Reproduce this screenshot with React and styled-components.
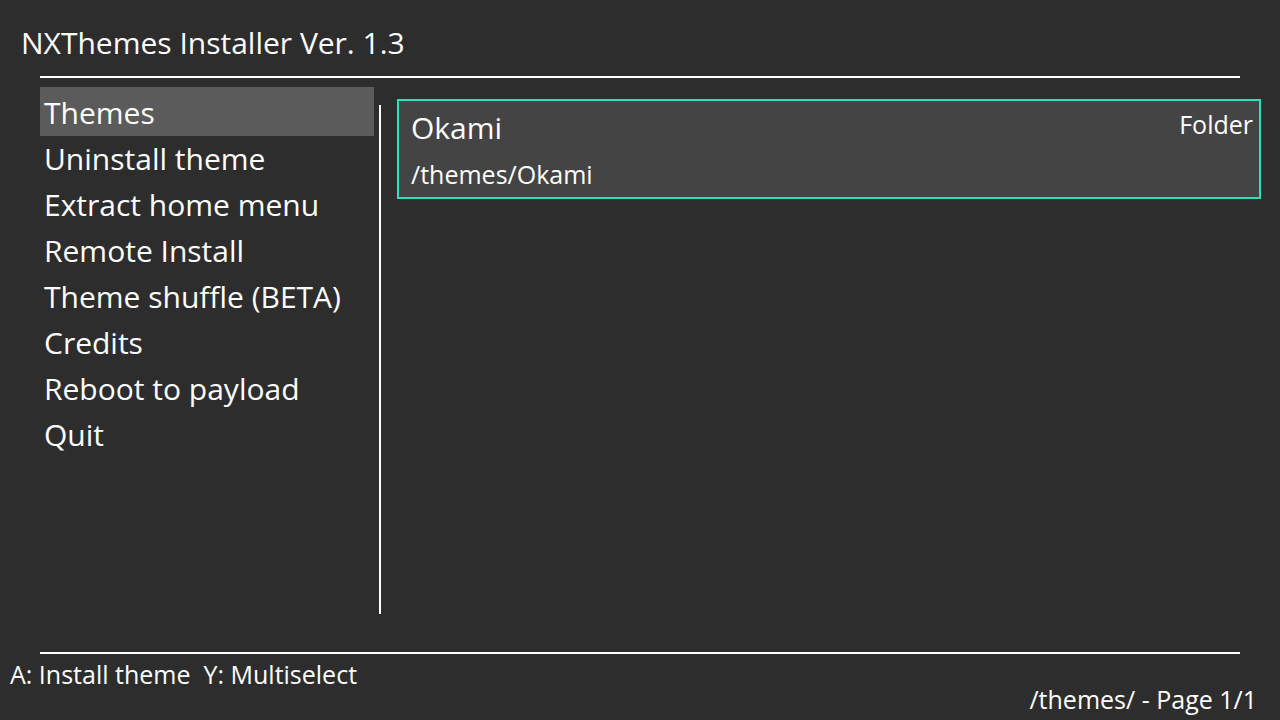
import React from "react";
import styled, { createGlobalStyle } from "styled-components";

const GlobalStyle = createGlobalStyle`
  html, body {
    margin: 0;
    padding: 0;
    background: #2d2d2d;
  }
  body {
    font-family: "Open Sans", "Noto Sans", sans-serif;
    color: #ffffff;
  }
`;

const menu = [
  "Themes",
  "Uninstall theme",
  "Extract home menu",
  "Remote Install",
  "Theme shuffle (BETA)",
  "Credits",
  "Reboot to payload",
  "Quit",
];

const App = () => {
  return (
    <Screen>
      <GlobalStyle />
      <Title>NXThemes Installer Ver. 1.3</Title>
      <Rule />
      <Body>
        <Sidebar>
          {menu.map((item, i) => (
            <MenuItem key={item} selected={i === 0}>
              {item}
            </MenuItem>
          ))}
        </Sidebar>
        <Divider />
        <Content>
          <Card>
            <CardHead>
              <CardTitle>Okami</CardTitle>
              <CardType>Folder</CardType>
            </CardHead>
            <CardPath>/themes/Okami</CardPath>
          </Card>
        </Content>
      </Body>
      <Rule />
      <Footer>
        <Hint>A: Install theme&nbsp;&nbsp;Y: Multiselect</Hint>
        <PageInfo>/themes/ - Page 1/1</PageInfo>
      </Footer>
    </Screen>
  );
};

const Screen = styled.div`
  width: 1280px;
  height: 720px;
  background: #2d2d2d;
  display: flex;
  flex-direction: column;
  overflow: hidden;
`;

const Title = styled.div`
  height: 76px;
  flex-shrink: 0;
  box-sizing: border-box;
  padding: 23px 0 0 21px;
  font-size: 30px;
  line-height: 40px;
`;

const Rule = styled.div`
  height: 2px;
  margin: 0 40px;
  background: #ffffff;
  flex-shrink: 0;
`;

const Body = styled.div`
  flex: 1;
  display: flex;
  min-height: 0;
`;

const Sidebar = styled.div`
  width: 334px;
  margin: 9px 0 0 40px;
  display: flex;
  flex-direction: column;
`;

const MenuItem = styled.div`
  height: 46px;
  padding: 0 0 0 4px;
  font-size: 30px;
  line-height: 52px;
  white-space: nowrap;
  background: ${(p) => (p.selected ? "#5b5b5b" : "transparent")};
  padding-bottom: ${(p) => (p.selected ? "3px" : "0")};
  margin-bottom: ${(p) => (p.selected ? "-3px" : "0")};
  position: relative;
  z-index: ${(p) => (p.selected ? 0 : 1)};
`;

const Divider = styled.div`
  width: 2px;
  margin: 27px 0 38px 5px;
  background: #ffffff;
`;

const Content = styled.div`
  flex: 1;
  padding: 21px 19px 0 16px;
`;

const Card = styled.div`
  height: 100px;
  box-sizing: border-box;
  border: 2px solid #2ee0bc;
  background: #444444;
  padding: 6px 6px 0 12px;
`;

const CardHead = styled.div`
  display: flex;
  justify-content: space-between;
  align-items: flex-start;
`;

const CardTitle = styled.div`
  font-size: 30px;
  line-height: 42px;
`;

const CardType = styled.div`
  font-size: 25px;
  line-height: 34px;
`;

const CardPath = styled.div`
  font-size: 25px;
  line-height: 30px;
  margin-top: 10px;
`;

const Footer = styled.div`
  flex: 0 0 66px;
  box-sizing: border-box;
  display: flex;
  flex-direction: column;
  padding: 5px 23px 0 10px;
`;

const Hint = styled.div`
  font-size: 25px;
  line-height: 30px;
  white-space: nowrap;
`;

const PageInfo = styled.div`
  font-size: 25px;
  line-height: 30px;
  margin-top: -5px;
  text-align: right;
`;

export default App;
